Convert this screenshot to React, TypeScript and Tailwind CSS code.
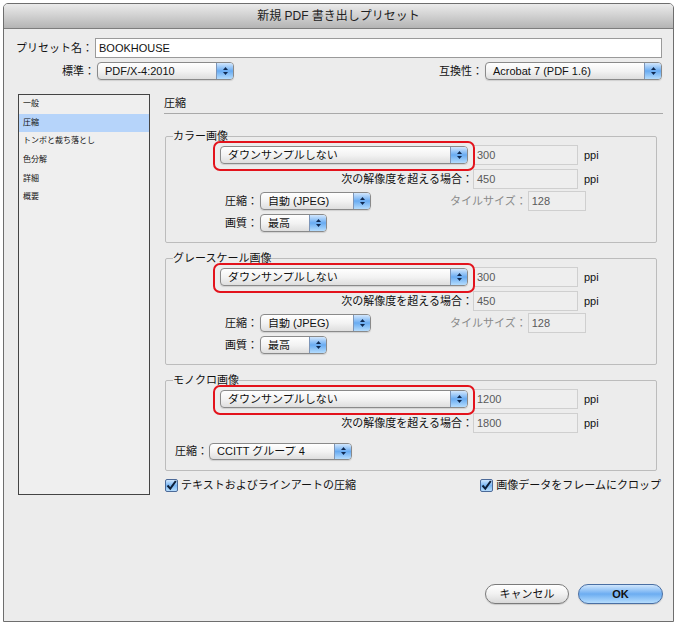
import React from "react";

const sideItems = ["一般", "圧縮", "トンボと裁ち落とし", "色分解", "詳細", "概要"];

function Arrows() {
  return (
    <svg width="7" height="10" viewBox="0 0 7 10">
      <polygon points="1,4 3.5,1 6,4" fill="#0f2a52" />
      <polygon points="1,6 3.5,9 6,6" fill="#0f2a52" />
    </svg>
  );
}

function Popup({ value, w, h = "h-[18px]" }: { value: string; w: string; h?: string }) {
  return (
    <div
      className={`${w} ${h} flex items-center rounded-[4px] border border-[#8a8a8a] bg-gradient-to-b from-white via-[#f3f3f3] to-[#dedede] overflow-hidden shadow-[0_1px_1px_rgba(0,0,0,0.12)]`}
    >
      <span className="flex-1 pl-[7px] truncate text-[#111]">{value}</span>
      <span className="w-[17px] h-full flex items-center justify-center border-l border-[#7c95b8] bg-gradient-to-b from-[#d2e7fd] via-[#68abf1] to-[#b4dcfd]">
        <Arrows />
      </span>
    </div>
  );
}

function Field({ value, w, disabled = true }: { value: string; w: string; disabled?: boolean }) {
  return (
    <div
      className={`${w} h-[20px] flex items-center pl-[3px] border ${
        disabled ? "border-[#cfcfcf] bg-[#eeeeee] text-[#5a5a5a]" : "border-[#9a9a9a] bg-white text-[#111]"
      }`}
    >
      {value}
    </div>
  );
}

function Check({ label }: { label: string }) {
  return (
    <div className="flex items-center h-[16px]">
      <span className="w-[13px] h-[13px] rounded-[2px] border border-[#4c6a98] bg-gradient-to-b from-[#cfe6fd] via-[#79b6f3] to-[#b7ddfc] flex items-center justify-center">
        <svg width="11" height="11" viewBox="0 0 11 11">
          <path d="M1.5 5.5 L4.3 8.6 L9.8 1" fill="none" stroke="#0d1f3a" strokeWidth="2" />
        </svg>
      </span>
      <span className="ml-[3px]">{label}</span>
    </div>
  );
}

function RedMark() {
  return (
    <div className="absolute left-[-7px] top-[-5px] w-[262px] h-[30px] rounded-[7px] border-2 border-[#e3131c]" />
  );
}

function ImageGroup({
  title,
  dpi,
  over,
  mono,
  top,
}: {
  title: string;
  dpi: string;
  over: string;
  mono?: boolean;
  top: string;
}) {
  return (
    <fieldset className={`${top} ml-[1px] w-[492px] border border-[#bcbcbc] rounded-[2px] pb-[10px]`}>
      <legend className="ml-[7px] leading-[14px] text-[#111]">{title}</legend>
      <div className="relative mt-[2px] h-[20px] flex items-center pl-[54px]">
        <div className="relative">
          <RedMark />
          <Popup value="ダウンサンプルしない" w="w-[248px]" />
        </div>
        <div className="ml-[5px]">
          <Field value={dpi} w="w-[105px]" />
        </div>
        <span className="ml-[6px]">ppi</span>
      </div>
      <div className="mt-[4px] h-[20px] flex items-center">
        <span className="w-[307px] text-right">次の解像度を超える場合：</span>
        <Field value={over} w="w-[105px]" />
        <span className="ml-[6px]">ppi</span>
      </div>
      {mono ? (
        <div className="mt-[9px] h-[18px] flex items-center pl-[9px]">
          <span>圧縮：</span>
          <div className="ml-[1px]">
            <Popup value="CCITT グループ 4" w="w-[143px]" h="h-[17px]" />
          </div>
        </div>
      ) : (
        <>
          <div className="mt-[2px] h-[20px] flex items-center pl-[59px]">
            <span>圧縮：</span>
            <div className="ml-[2px]">
              <Popup value="自動 (JPEG)" w="w-[111px]" />
            </div>
            <span className="ml-[79px] text-[#8a8a8a]">タイルサイズ：</span>
            <div className="ml-[1px]">
              <Field value="128" w="w-[58px]" />
            </div>
          </div>
          <div className="mt-[3px] h-[18px] flex items-center pl-[59px]">
            <span>画質：</span>
            <div className="ml-[2px]">
              <Popup value="最高" w="w-[67px]" />
            </div>
          </div>
        </>
      )}
    </fieldset>
  );
}

export default function App() {
  return (
    <div className="w-[680px] h-[626px] bg-white pt-[3px] pl-[3px] text-[11px] leading-none text-[#111] font-['Liberation_Sans','Noto_Sans_CJK_JP',sans-serif]">
      <div className="w-[671px] h-[619px] flex flex-col border border-[#6e6e6e] rounded-t-[5px] bg-[#ececec] overflow-hidden">
        <div className="h-[25px] shrink-0 flex items-center justify-center border-b border-[#7d7d7d] bg-gradient-to-b from-[#ebebeb] via-[#d0d0d0] to-[#b4b4b4] text-[12px] text-[#222]">
          新規 PDF 書き出しプリセット
        </div>

        <div className="flex-1 flex flex-col pb-[17px]">
          <div className="mt-[9px] h-[20px] flex items-center">
            <span className="w-[89px] text-right">プリセット名：</span>
            <div className="ml-[2px] flex-1 mr-[11px]">
              <Field value="BOOKHOUSE" w="w-full" disabled={false} />
            </div>
          </div>

          <div className="mt-[4px] h-[18px] flex items-center">
            <span className="w-[91px] text-right">標準：</span>
            <div className="ml-[2px]">
              <Popup value="PDF/X-4:2010" w="w-[137px]" />
            </div>
            <div className="flex-1" />
            <span>互換性：</span>
            <div className="ml-[2px] mr-[11px]">
              <Popup value="Acrobat 7 (PDF 1.6)" w="w-[177px]" />
            </div>
          </div>

          <div className="mt-[14px] flex">
            <div className="ml-[14px] w-[132px] h-[401px] border border-[#444] bg-[#efefef] text-[8px]">
              {sideItems.map((item, i) => (
                <div
                  key={item}
                  className={`h-[18.6px] flex items-center pl-[4px] ${i === 1 ? "bg-[#b6d4fa]" : ""}`}
                >
                  {item}
                </div>
              ))}
            </div>

            <div className="ml-[14px] w-[499px]">
              <div className="h-[20px] pt-[4px] border-b border-[#a9a9a9]">圧縮</div>
              <ImageGroup top="mt-[15px]" title="カラー画像" dpi="300" over="450" />
              <ImageGroup top="mt-[8px]" title="グレースケール画像" dpi="300" over="450" />
              <ImageGroup top="mt-[8px]" title="モノクロ画像" dpi="1200" over="1800" mono />
              <div className="mt-[6px] ml-[1px] pr-[2px] flex justify-between">
                <Check label="テキストおよびラインアートの圧縮" />
                <Check label="画像データをフレームにクロップ" />
              </div>
            </div>
          </div>

          <div className="mt-auto flex justify-end gap-[9px] mr-[10px]">
            <button className="w-[84px] h-[20px] rounded-full border border-[#7a7a7a] bg-gradient-to-b from-white via-[#f1f1f1] to-[#d9d9d9] text-[11px] shadow-[0_1px_1px_rgba(0,0,0,0.15)]">
              キャンセル
            </button>
            <button className="w-[85px] h-[20px] rounded-full border border-[#4a6fa3] bg-gradient-to-b from-[#d0e6fc] via-[#6cadf1] to-[#b6ddfd] text-[11px] font-bold shadow-[0_1px_1px_rgba(0,0,0,0.15)]">
              OK
            </button>
          </div>
        </div>
      </div>
    </div>
  );
}
